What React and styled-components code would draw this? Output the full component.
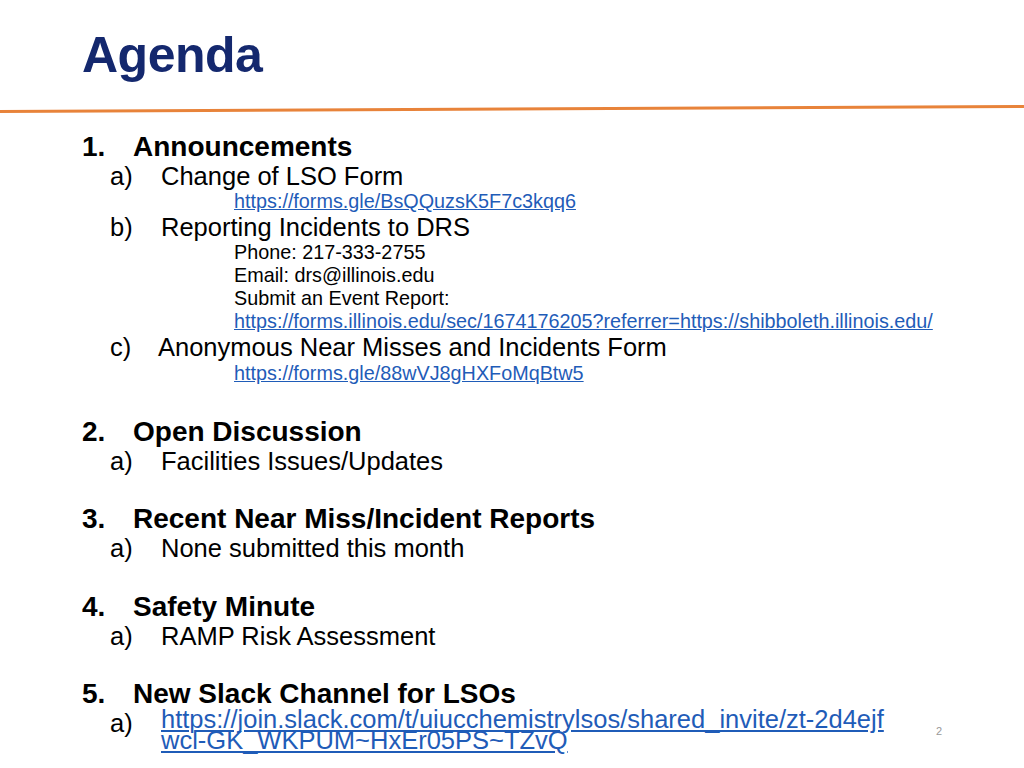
import styled, { createGlobalStyle } from "styled-components";

const Global = createGlobalStyle`
	html, body { margin: 0; padding: 0; background: #fff; }
	body { font-family: "Liberation Sans", Arial, sans-serif; color: #000; }
`;

const Slide = styled.div`
	width: 1024px;
	height: 768px;
	overflow: hidden;
	position: relative;
	display: flex;
	flex-direction: column;
`;

const Title = styled.h1`
	margin: 0;
	padding: 28px 0 0 82px;
	height: 54px;
	font-size: 50px;
	font-weight: bold;
	letter-spacing: -0.5px;
	color: #14286e;
	line-height: 54px;
`;

const Rule = styled.div`
	margin-top: 28px;
	height: 3px;
	background: #e8833a;
	transform: rotate(-0.28deg);
	transform-origin: left;
`;

const Body = styled.div`
	padding-top: 19px;
	display: flex;
	flex-direction: column;
`;

const Section = styled.div`
	margin-top: ${p => p.$gap || 0}px;
	display: flex;
	flex-direction: column;
`;

const Heading = styled.div`
	display: flex;
	height: 30px;
	line-height: 30px;
	font-size: 28px;
	font-weight: bold;
	padding-left: 82px;
	span { width: 51px; }
`;

const Item = styled.div`
	display: flex;
	height: ${p => p.$h || 29}px;
	line-height: 29px;
	font-size: 25.5px;
	padding-left: 110px;
	span { width: ${p => p.$w || 51}px; flex-shrink: 0; }
`;

const Detail = styled.div`
	height: 23px;
	line-height: 23px;
	font-size: 19.8px;
	padding-left: 234px;
	white-space: nowrap;
`;

const Link = styled.a`
	color: #1f5cb8;
	text-decoration: underline;
`;

const WrapLink = styled(Link)`
	display: block;
	line-height: 21px;
	width: 740px;
	word-break: break-all;
`;

const PageNum = styled.div`
	position: absolute;
	left: 936px;
	top: 725px;
	font-size: 11px;
	color: #999;
`;

export default function App() {
	return (
		<Slide>
			<Global />
			<Title>Agenda</Title>
			<Rule />
			<Body>
				<Section>
					<Heading><span>1.</span>Announcements</Heading>
					<Item $h={28}><span>a)</span>Change of LSO Form</Item>
					<Detail><Link>https://forms.gle/BsQQuzsK5F7c3kqq6</Link></Detail>
					<Item $h={28}><span>b)</span>Reporting Incidents to DRS</Item>
					<Detail>Phone: 217-333-2755</Detail>
					<Detail>Email: drs@illinois.edu</Detail>
					<Detail>Submit an Event Report:</Detail>
					<Detail><Link>https://forms.illinois.edu/sec/1674176205?referrer=https://shibboleth.illinois.edu/</Link></Detail>
					<Item $w={48}><span>c)</span>Anonymous Near Misses and Incidents Form</Item>
					<Detail><Link>https://forms.gle/88wVJ8gHXFoMqBtw5</Link></Detail>
				</Section>
				<Section $gap={32}>
					<Heading><span>2.</span>Open Discussion</Heading>
					<Item><span>a)</span>Facilities Issues/Updates</Item>
				</Section>
				<Section $gap={28}>
					<Heading><span>3.</span>Recent Near Miss/Incident Reports</Heading>
					<Item><span>a)</span>None submitted this month</Item>
				</Section>
				<Section $gap={29}>
					<Heading><span>4.</span>Safety Minute</Heading>
					<Item><span>a)</span>RAMP Risk Assessment</Item>
				</Section>
				<Section $gap={28}>
					<Heading><span>5.</span>New Slack Channel for LSOs</Heading>
					<Item $h={50}><span>a)</span><WrapLink>https://join.slack.com/t/uiucchemistrylsos/shared_invite/zt-2d4ejfwcl-GK_WKPUM~HxEr05PS~TZvQ</WrapLink></Item>
				</Section>
			</Body>
			<PageNum>2</PageNum>
		</Slide>
	);
}
